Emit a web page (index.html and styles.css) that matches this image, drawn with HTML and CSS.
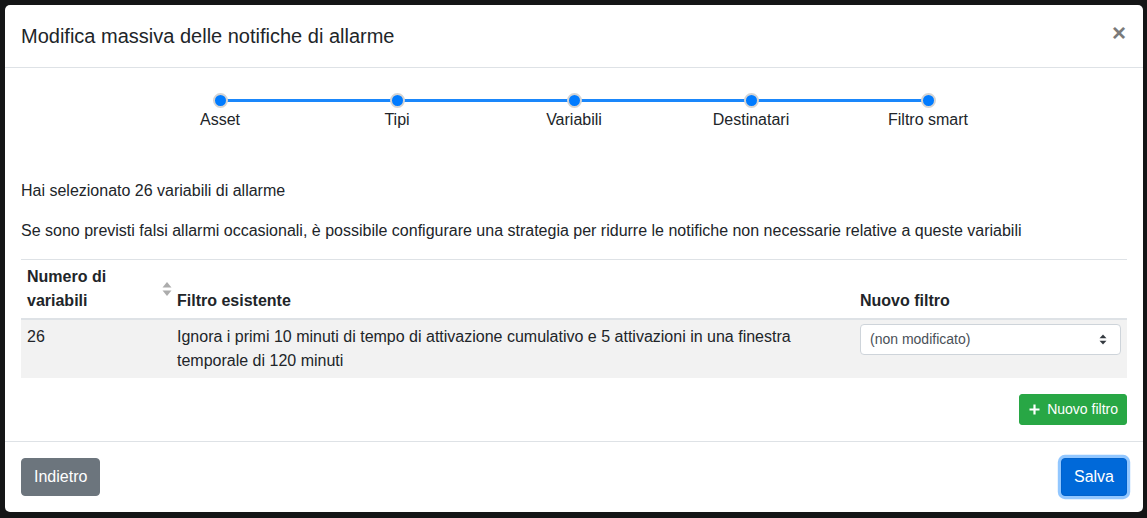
FILE: index.html
```html
<!DOCTYPE html>
<html lang="it">
<head>
<meta charset="utf-8">
<title>Modifica massiva</title>
<link rel="stylesheet" href="styles.css">
</head>
<body>
<div class="backdrop">
  <div class="modal">
    <div class="modal-header">
      <h5 class="modal-title">Modifica massiva delle notifiche di allarme</h5>
      <span class="close">&times;</span>
    </div>
    <div class="modal-body">
      <div class="stepper">
        <div class="step first"><span class="dot"></span><span class="label">Asset</span></div>
        <div class="step"><span class="dot"></span><span class="label">Tipi</span></div>
        <div class="step"><span class="dot"></span><span class="label">Variabili</span></div>
        <div class="step"><span class="dot"></span><span class="label">Destinatari</span></div>
        <div class="step last"><span class="dot"></span><span class="label">Filtro smart</span></div>
      </div>
      <p>Hai selezionato 26 variabili di allarme</p>
      <p>Se sono previsti falsi allarmi occasionali, è possibile configurare una strategia per ridurre le notifiche non necessarie relative a queste variabili</p>
      <table class="table">
        <thead>
          <tr>
            <th class="col-num"><div class="sortable">Numero di variabili<span class="sort-icon"><svg width="10" height="16" viewBox="0 0 10 16"><path d="M5 1 L9.5 6.5 L0.5 6.5 Z" fill="#acacac"/><path d="M5 15 L9.5 9.5 L0.5 9.5 Z" fill="#acacac"/></svg></span></div></th>
            <th class="col-filter">Filtro esistente</th>
            <th class="col-new">Nuovo filtro</th>
          </tr>
        </thead>
        <tbody>
          <tr>
            <td>26</td>
            <td>Ignora i primi 10 minuti di tempo di attivazione cumulativo e 5 attivazioni in una finestra temporale di 120 minuti</td>
            <td><div class="select"><span>(non modificato)</span><svg width="8" height="11" viewBox="0 0 8 11"><path d="M4 0.5 L7.5 4.3 L0.5 4.3 Z" fill="#343a40"/><path d="M4 10.5 L7.5 6.7 L0.5 6.7 Z" fill="#343a40"/></svg></div></td>
          </tr>
        </tbody>
      </table>
      <div class="actions">
        <button class="btn btn-success btn-sm"><svg width="11" height="11" viewBox="0 0 11 11"><path d="M5.5 0.5 V10.5 M0.5 5.5 H10.5" stroke="#fff" stroke-width="2.2"/></svg>Nuovo filtro</button>
      </div>
    </div>
    <div class="modal-footer">
      <button class="btn btn-secondary">Indietro</button>
      <button class="btn btn-primary focus">Salva</button>
    </div>
  </div>
</div>
</body>
</html>
```

FILE: styles.css
```css
* { box-sizing: border-box; }
html, body { margin: 0; padding: 0; }
body {
  font-family: "Liberation Sans", Arial, sans-serif;
  font-size: 16px;
  line-height: 1.5;
  color: #212529;
  background: #141516;
  width: 1147px;
  height: 518px;
  overflow: hidden;
}
.backdrop {
  padding: 5px 0 0 5px;
}
.modal {
  width: 1138px;
  background: #fff;
  border-radius: 5px;
  overflow: hidden;
}
.modal-header {
  display: flex;
  align-items: center;
  justify-content: space-between;
  padding: 16px 16px 16px 16px;
  border-bottom: 1px solid #dee2e6;
}
.modal-title {
  margin: 0;
  font-size: 20px;
  font-weight: 400;
  line-height: 30px;
}
.close {
  font-size: 24px;
  font-weight: 700;
  line-height: 1;
  color: #7a7a7a;
  margin-right: 1px;
  margin-top: -6px;
}
.modal-body {
  padding: 16px;
}
.stepper {
  display: flex;
  justify-content: center;
  padding-top: 9px;
  margin: 0 0 47px 0;
}
.step {
  width: 177px;
  display: flex;
  flex-direction: column;
  align-items: center;
  position: relative;
}
.step::before {
  content: "";
  position: absolute;
  top: 6px;
  left: 0;
  right: 0;
  height: 3px;
  background: #1a87fb;
}
.step.first::before { left: 50%; }
.step.last::before { right: 50%; }
.dot {
  position: relative;
  width: 15px;
  height: 15px;
  border-radius: 50%;
  background: #007bff;
  border: 2px solid #d4d4d4;
  z-index: 1;
}
.label {
  line-height: 24px;
  margin-top: 0;
}
p {
  margin: 0 0 16px 0;
}
.table {
  width: 100%;
  border-collapse: collapse;
  margin-bottom: 16px;
}
.table th, .table td {
  padding: 4px 6px 4px 6px;
  vertical-align: top;
  text-align: left;
  border-top: 1px solid #dee2e6;
}
.table th {
  vertical-align: bottom;
  font-weight: 700;
  border-bottom: 2px solid #dee2e6;
  padding-top: 5px;
  padding-bottom: 5px;
}
.col-num { width: 150px; }
.col-new { width: 273px; }
.sortable {
  position: relative;
  padding-right: 12px;
}
.sort-icon {
  position: absolute;
  right: -7px;
  top: 16px;
  line-height: 0;
}
.table tbody tr { background: #f2f2f2; }
.table tbody td { padding-top: 5px; padding-bottom: 5px; }
.select {
  display: flex;
  align-items: center;
  justify-content: space-between;
  height: 31px;
  padding: 0 13px 0 9px;
  border: 1px solid #ced4da;
  border-radius: 4px;
  background: #fff;
  font-size: 14px;
  color: #495057;
  margin-top: -1px;
}
.actions {
  display: flex;
  justify-content: flex-end;
}
.btn {
  font-family: "Liberation Sans", Arial, sans-serif;
  border: 1px solid transparent;
  border-radius: 4px;
  color: #fff;
  font-size: 16px;
  line-height: 24px;
  padding: 6px 12px;
  display: inline-flex;
  align-items: center;
}
.btn-sm {
  font-size: 14px;
  line-height: 21px;
  padding: 4px 8px;
  border-radius: 3px;
}
.btn-sm svg { margin-right: 7px; margin-left: 1px; }
.btn-success { background: #28a745; border-color: #28a745; }
.btn-secondary { background: #6c757d; border-color: #6c757d; }
.btn-primary { background: #0069d9; border-color: #0062cc; }
.btn-primary.focus { box-shadow: 0 0 0 3.2px rgba(38, 143, 255, 0.5); }
.modal-footer {
  display: flex;
  justify-content: space-between;
  align-items: center;
  padding: 16px;
  border-top: 1px solid #dee2e6;
}
```
